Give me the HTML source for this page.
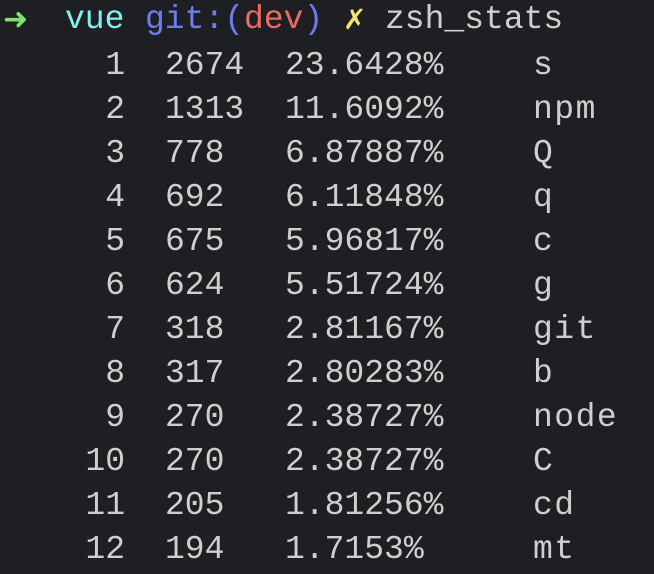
<!DOCTYPE html>
<html><head><meta charset="utf-8"><style>
html,body{margin:0;padding:0;background:#1e1f22;width:654px;height:574px;overflow:hidden}
body{position:relative;font-family:"Liberation Mono","DejaVu Sans Mono",monospace;font-size:33px;color:#cfcfcf;line-height:44px}
.r{position:absolute;left:0;width:654px;height:44px}
.r span{position:absolute;white-space:pre}
.i{right:529px;text-align:right}
.c{left:165px}.p{left:285px}.n{left:533px;letter-spacing:1.5px}
</style></head><body>
<div class="r" style="top:-2px">
<span style="left:3px;color:#7ee36c;font-size:30px;font-family:'DejaVu Sans',sans-serif">➜</span>
<span style="left:65px;color:#7ff0ee">vue</span>
<span style="left:145px;color:#6f7cf0">git:(<span style="position:static;color:#ee6b66">dev</span>)</span>
<span style="left:343px;color:#f5e66a;font-family:'DejaVu Sans',sans-serif;font-size:28px">✗</span>
<span style="left:385px">zsh_stats</span>
</div>
<div class="r" style="top:44px"><span class="i">1</span><span class="c">2674</span><span class="p">23.6428%</span><span class="n">s</span></div>
<div class="r" style="top:88px"><span class="i">2</span><span class="c">1313</span><span class="p">11.6092%</span><span class="n">npm</span></div>
<div class="r" style="top:132px"><span class="i">3</span><span class="c">778</span><span class="p">6.87887%</span><span class="n">Q</span></div>
<div class="r" style="top:176px"><span class="i">4</span><span class="c">692</span><span class="p">6.11848%</span><span class="n">q</span></div>
<div class="r" style="top:220px"><span class="i">5</span><span class="c">675</span><span class="p">5.96817%</span><span class="n">c</span></div>
<div class="r" style="top:264px"><span class="i">6</span><span class="c">624</span><span class="p">5.51724%</span><span class="n">g</span></div>
<div class="r" style="top:308px"><span class="i">7</span><span class="c">318</span><span class="p">2.81167%</span><span class="n">git</span></div>
<div class="r" style="top:352px"><span class="i">8</span><span class="c">317</span><span class="p">2.80283%</span><span class="n">b</span></div>
<div class="r" style="top:396px"><span class="i">9</span><span class="c">270</span><span class="p">2.38727%</span><span class="n">node</span></div>
<div class="r" style="top:440px"><span class="i">10</span><span class="c">270</span><span class="p">2.38727%</span><span class="n">C</span></div>
<div class="r" style="top:484px"><span class="i">11</span><span class="c">205</span><span class="p">1.81256%</span><span class="n">cd</span></div>
<div class="r" style="top:528px"><span class="i">12</span><span class="c">194</span><span class="p">1.7153%</span><span class="n">mt</span></div>
</body></html>
